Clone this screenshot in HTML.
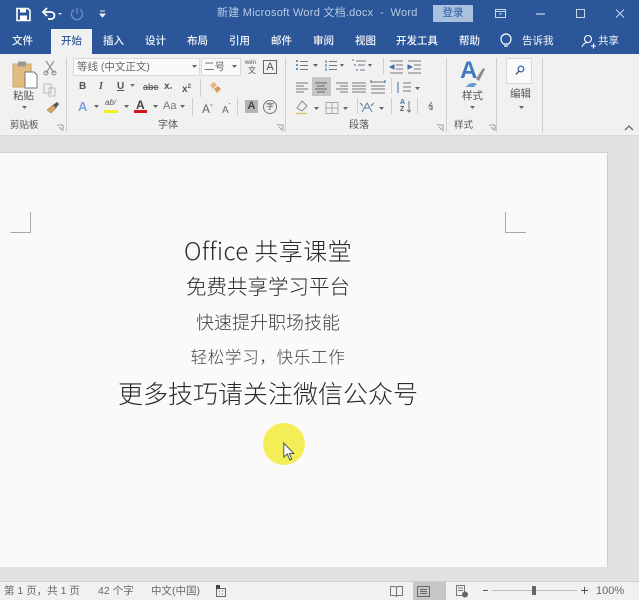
<!DOCTYPE html>
<html lang="zh"><head><meta charset="utf-8"><style>
html,body{margin:0;padding:0}
#r{position:relative;width:639px;height:600px;overflow:hidden;background:#e2e2e2;font-family:"Liberation Sans","Noto Sans CJK SC",sans-serif;color:#444;filter:blur(.35px)}
#r div,#r span.t{position:absolute;white-space:nowrap}
.tab{top:34px;font-size:10.5px;line-height:15px;color:#fff;font-weight:500;opacity:.95}
.s{font-size:10px;line-height:12px;color:#555}
.g{font-size:9.5px;line-height:12px;color:#555}
.d{color:#2a2a2a;font-family:"Noto Sans CJK SC",sans-serif;font-weight:300;left:0;width:536px;text-align:center}
.sep{width:1px;background:#cfcfcf}
svg{position:absolute;overflow:visible}
</style></head><body><div id="r">
<div style="left:0;top:0;width:639px;height:55px;background:#2b579a"></div>
<div style="left:0;top:54px;width:639px;height:81px;background:#f1f1f1"></div>
<div style="left:0;top:135px;width:639px;height:1px;background:#d8d8d8"></div>

<svg style="left:0;top:0" width="120" height="28" fill="none">
<path d="M17 8.500h11l2 2v10H17z" stroke="#fff" stroke-width="1.600"/><rect x="20" y="9" width="6" height="3.500" fill="#fff"/><rect x="20" y="15.500" width="7" height="4.500" fill="#fff"/>
<path d="M44 12h7a3.500 3.500 0 0 1 0 7h-3" stroke="#fff" stroke-width="1.800"/><path d="M47 8l-4 4 4 4" stroke="#fff" stroke-width="1.800"/>
<path d="M58 13l2 2 2-2z" fill="#dfe6f2"/>
<path d="M74 9.500a5.500 5.500 0 1 0 6 0M77 8v6" stroke="#6f8fc0" stroke-width="1.300"/>
<path d="M100 11h5M100 14l2.500 3 2.500-3z" stroke="#e8eef8" fill="#e8eef8"/>
</svg>
<div style="left:217px;top:6px;font-size:11px;line-height:15px;letter-spacing:.25px;color:#b9cbe4">新建 Microsoft Word 文档.docx&nbsp; -&nbsp; Word</div>
<div style="left:433px;top:5px;width:40px;height:17px;background:#a9c0df;color:#2b579a;font-size:10.500px;line-height:17px;text-align:center">登录</div>
<svg style="left:490px;top:5px" width="149" height="20" fill="none" stroke="#c9d7ea">
<rect x="5.500" y="4.500" width="10" height="8"/><path d="M5 6.500h11M9 9h3"/>
<path d="M46 9h9" stroke-width="1.200"/>
<rect x="86.500" y="4.500" width="8" height="8"/>
<path d="M126 4.500l8 8M134 4.500l-8 8"/></svg>

<div class="tab" style="left:12px">文件</div>
<div style="left:51px;top:29px;width:41px;height:26px;background:#f1f1f1"></div>
<div class="tab" style="left:61px;color:#2b579a">开始</div>
<div class="tab" style="left:103px">插入</div>
<div class="tab" style="left:145px">设计</div>
<div class="tab" style="left:187px">布局</div>
<div class="tab" style="left:229px">引用</div>
<div class="tab" style="left:271px">邮件</div>
<div class="tab" style="left:313px">审阅</div>
<div class="tab" style="left:355px">视图</div>
<div class="tab" style="left:396px">开发工具</div>
<div class="tab" style="left:459px">帮助</div>
<svg style="left:499px;top:33px" width="16" height="16" fill="none" stroke="#fff" stroke-width="1.200"><path d="M4.500 11C3 9.500 2 8 2 6a5 5 0 0 1 10 0c0 2-1 3.500-2.500 5zM5 13h4"/></svg>
<div class="tab" style="left:522px;font-weight:normal">告诉我</div>
<svg style="left:581px;top:34px" width="16" height="16" fill="none" stroke="#fff" stroke-width="1.100"><circle cx="7" cy="5" r="3.500"/><path d="M1 13c1-3 3-4.500 6-4.500M10 12h5M12.500 9.500v5"/></svg>
<div class="tab" style="left:598px;font-weight:normal">共享</div>

<!-- clipboard -->
<svg style="left:10px;top:58px" width="50" height="55" fill="none">
<rect x="3" y="6" width="18" height="23" fill="#e3bd7f" stroke="#c9a56a"/><rect x="8" y="3.500" width="8" height="5" fill="#999"/>
<path d="M15 14h9l3 3v13H15z" fill="#fff" stroke="#777"/>
<path d="M36 3l8 12M44 3l-8 12" stroke="#999" stroke-width="1.300"/><circle cx="36" cy="15" r="2" stroke="#888"/><circle cx="44" cy="15" r="2" stroke="#888"/>
<path d="M34 26h7l0 9h-7zM39 30h6v8h-6z" stroke="#bbb"/>
<path d="M37 52l6-5 3 3-5 5z" fill="#d6a566" stroke="#a9824f" stroke-width=".6"/><path d="M43 47l4-3 2 2-3 4z" fill="#555"/>
</svg>
<div class="s" style="left:13px;top:90px;font-size:10.500px">粘贴</div>
<svg style="left:22px;top:106px" width="8" height="5"><path d="M0 0h5l-2.500 3z" fill="#666"/></svg>
<div class="g" style="left:10px;top:120px">剪贴板</div>
<div class="sep" style="left:66px;top:58px;height:74px"></div>

<!-- font -->
<div style="left:73px;top:58px;width:127px;height:18px;background:#fafafa;border:1px solid #d9d9d9;box-sizing:border-box;font-size:10.500px;line-height:16px;color:#666;padding-left:3px">等线 (中文正文)</div>
<div style="left:201px;top:58px;width:40px;height:18px;background:#fafafa;border:1px solid #d9d9d9;box-sizing:border-box;font-size:10.500px;line-height:16px;color:#666;padding-left:2px">二号</div>
<svg style="left:192px;top:65px" width="50" height="5"><path d="M0 0h5l-2.500 3zM40 0h5l-2.500 3z" fill="#666"/></svg>
<div style="left:245px;top:60px;font-size:6px;line-height:7px;color:#555">wén</div>
<div style="left:248px;top:66px;font-size:8px;line-height:9px;color:#555">文</div>
<div style="left:263px;top:60px;width:14px;height:14px;border:1px solid #666;box-sizing:border-box;font-size:11px;line-height:13px;text-align:center;color:#555">A</div>

<div style="left:79px;top:81px;font-size:10px;line-height:12px;font-weight:bold;color:#555">B</div>
<div style="left:99px;top:81px;font-size:10px;line-height:12px;font-style:italic;font-family:'Liberation Serif',serif;font-weight:bold;color:#555">I</div>
<div style="left:117px;top:81px;font-size:10px;line-height:12px;font-weight:bold;text-decoration:underline;color:#555">U</div>
<div style="left:143px;top:81px;font-size:9px;line-height:12px;font-weight:bold;text-decoration:line-through;color:#666">abc</div>
<div style="left:164px;top:81px;font-size:10px;line-height:12px;font-weight:bold;color:#555">x<span style="font-size:6px">₂</span></div>
<div style="left:182px;top:81px;font-size:10px;line-height:12px;font-weight:bold;color:#555">x<span style="font-size:6px;vertical-align:4px">2</span></div>
<svg style="left:130px;top:84px" width="8" height="5"><path d="M0 0h5l-2.500 3z" fill="#777"/></svg>
<div class="sep" style="left:200px;top:79px;height:18px"></div>
<svg style="left:207px;top:80px" width="16" height="14"><path d="M3 5l4-3 3 3-4 4z" fill="#e4b478"/><path d="M7 9l4-3 3 3-4 4z" fill="#d89a5c"/></svg>

<div style="left:78px;top:99px;font-size:13px;line-height:15px;color:#7fa6d8;font-weight:bold">A</div>
<svg style="left:94px;top:105px" width="6" height="4"><path d="M0 0h5l-2.500 3z" fill="#666"/></svg>
<div style="left:105px;top:98px;font-size:8px;line-height:10px;color:#555;font-style:italic">ab<span style="color:#888">/</span></div>
<div style="left:104px;top:110px;width:14px;height:3px;background:#f2ef1c"></div>
<svg style="left:124px;top:105px" width="6" height="4"><path d="M0 0h5l-2.500 3z" fill="#666"/></svg>
<div style="left:136px;top:99px;font-size:12px;line-height:12px;color:#444;font-weight:bold">A</div>
<div style="left:134px;top:110px;width:13px;height:3px;background:#d4141c"></div>
<svg style="left:153px;top:105px" width="6" height="4"><path d="M0 0h5l-2.500 3z" fill="#666"/></svg>
<div style="left:163px;top:100px;font-size:11px;line-height:13px;color:#777">Aa</div>
<svg style="left:180px;top:105px" width="6" height="4"><path d="M0 0h5l-2.500 3z" fill="#666"/></svg>
<div class="sep" style="left:192px;top:98px;height:18px"></div>
<div style="left:202px;top:100px;font-size:12px;line-height:14px;color:#666">A<span style="font-size:6px;vertical-align:5px">^</span></div>
<div style="left:222px;top:101px;font-size:10px;line-height:13px;color:#666">A<span style="font-size:6px;vertical-align:5px">ˇ</span></div>
<div class="sep" style="left:237px;top:98px;height:18px"></div>
<div style="left:245px;top:100px;width:13px;height:13px;background:#b5b5b5;font-size:11px;line-height:13px;text-align:center;font-weight:bold;color:#444">A</div>
<div style="left:263px;top:100px;width:14px;height:14px;border:1px solid #777;border-radius:50%;box-sizing:border-box;font-size:8px;line-height:12px;text-align:center;color:#555">字</div>
<div class="g" style="left:158px;top:120px;font-size:10px">字体</div>
<svg style="left:56px;top:124px" width="230" height="9" fill="none" stroke="#888" stroke-width=".8"><path d="M1 1h6v6M3 3l3 3M221 1h6v6M223 3l3 3"/></svg>
<div class="sep" style="left:285px;top:58px;height:74px"></div>

<!-- paragraph -->
<div style="left:312px;top:77px;width:19px;height:19px;background:#c6c6c6"></div>
<svg style="left:294px;top:58px" width="150" height="60" fill="none" stroke="#777">
<path d="M2 3h2M2 7h2M2 11h2" stroke="#3f6fae" stroke-width="1.500"/><path d="M6 3.500h8M6 7.500h8M6 11.500h8"/><path d="M19 6h5l-2.500 3z" fill="#666" stroke="none"/>
<path d="M32 2v3M32 6v3M32 10v3" stroke="#3f6fae"/><path d="M35 3.500h8M35 7.500h8M35 11.500h8"/><path d="M46 6h4l-2 3z" fill="#666" stroke="none"/>
<path d="M58 2h2M60 7h2M62 12h2" stroke="#3f6fae"/><path d="M62 3h10M64 7h7M66 12h5"/><path d="M74 6h4l-2 3z" fill="#666" stroke="none"/>
<path d="M96 3h13M102 7h7M102 11h7M96 15h13"/><path d="M100 7l-4 2 4 2z" fill="#3f6fae" stroke="#3f6fae"/>
<path d="M114 3h13M120 7h7M120 11h7M114 15h13"/><path d="M114 7l4 2-4 2z" fill="#3f6fae" stroke="#3f6fae"/>
<path d="M2 25h12M2 28h8M2 31h12M2 34h8"/>
<path d="M21 25h12M23 28h8M21 31h12M23 34h8" stroke="#666"/>
<path d="M42 25h12M46 28h8M42 31h12M46 34h8"/><path d="M58 25h14M58 28h14M58 31h14M58 34h14"/>
<path d="M77 24h14M77 28h14M77 31h14M77 35h14"/><path d="M77 22v3M91 22v3" stroke="#3f6fae"/>
<path d="M109 25h8M109 29h8M109 33h8"/><path d="M104 24v11" stroke="#3f6fae"/>
<path d="M121 29h5l-2.500 3z" fill="#666" stroke="none"/>
<rect x="32" y="44.500" width="12" height="11" stroke="#aaa"/><path d="M38 44.500v11M32 50h12" stroke="#aaa"/>
<path d="M49 49h5l-2.500 3z" fill="#666" stroke="none"/>
<path d="M3 50l5-7 5 5-5 5z" stroke="#888"/><path d="M2 55.500h11" stroke="#d8c77a" stroke-width="1.500"/>
<path d="M20 49h5l-2.500 3z" fill="#666" stroke="none"/>
<path d="M68 54l5-9 5 9M70 50h6M66 45l3 3M80 45l-3 3" stroke="#5a7ea8"/>
<path d="M85 49h5l-2.500 3z" fill="#666" stroke="none"/>
<path d="M115 43v11M113 52l2 2 2-2" stroke="#777"/>
<path d="M138 44l-3 4h3M138 47v5M135 50l3 2" stroke="#666"/>
</svg>
<div class="sep" style="left:383px;top:58px;height:16px"></div>
<div class="sep" style="left:391px;top:78px;height:16px"></div>
<div class="sep" style="left:391px;top:98px;height:16px"></div>
<div class="sep" style="left:357px;top:98px;height:16px"></div>
<div class="sep" style="left:417px;top:98px;height:16px"></div>
<div style="left:400px;top:99px;font-size:7px;line-height:8px;color:#3f6fae;font-weight:bold">A</div>
<div style="left:400px;top:106px;font-size:7px;line-height:8px;color:#555;font-weight:bold">Z</div>
<div class="g" style="left:349px;top:120px;font-size:10px">段落</div>
<svg style="left:436px;top:124px" width="90" height="9" fill="none" stroke="#888" stroke-width=".8"><path d="M1 1h6v6M3 3l3 3M53 1h6v6M55 3l3 3"/></svg>
<div class="sep" style="left:446px;top:58px;height:74px"></div>

<!-- styles -->
<div style="left:460px;top:57px;font-size:24px;line-height:28px;font-weight:bold;color:#3f79bf">A</div>
<svg style="left:461px;top:62px" width="28" height="28"><path d="M15 17l7-11 2 1-6 12z" fill="#8a8a8a"/><path d="M5 25c2-4 7-5 11-3l-3 3z" fill="#6c9bd2"/></svg>
<div class="s" style="left:462px;top:90px;font-size:10.500px">样式</div>
<svg style="left:470px;top:106px" width="8" height="5"><path d="M0 0h5l-2.500 3z" fill="#666"/></svg>
<div class="g" style="left:454px;top:120px">样式</div>
<div class="sep" style="left:496px;top:58px;height:74px"></div>

<!-- editing -->
<div style="left:506px;top:58px;width:26px;height:26px;background:#fafafa;border:1px solid #d9d9d9;box-sizing:border-box"></div>
<svg style="left:512px;top:62px" width="14" height="14" fill="none" stroke="#3f6fae" stroke-width="1.300"><circle cx="9" cy="7" r="2.800"/><path d="M7 9l-3 3.500" stroke="#666" stroke-width="1.600"/></svg>
<div class="s" style="left:510px;top:88px;font-size:10.500px">编辑</div>
<svg style="left:519px;top:106px" width="8" height="5"><path d="M0 0h5l-2.500 3z" fill="#666"/></svg>
<div class="sep" style="left:542px;top:58px;height:74px"></div>
<svg style="left:624px;top:124px" width="12" height="8" fill="none" stroke="#666" stroke-width="1.300"><path d="M1 6l4-4 4 4"/></svg>

<!-- document -->
<div style="left:0;top:152px;width:607px;height:415px;background:#fafafa"></div>
<div style="left:0;top:152px;width:607px;height:1px;background:#d3d3d3"></div>
<div style="left:607px;top:152px;width:1px;height:415px;background:#cfcfcf"></div>
<svg style="left:0;top:205px" width="540" height="30" fill="none" stroke="#a8a8a8"><path d="M10.500 27.500H30.500V7M505.500 7V27.500H526"/></svg>

<div class="d" style="top:234px;font-size:24px;line-height:32px;letter-spacing:.4px">Office 共享课堂</div>
<div class="d" style="top:270px;font-size:20.500px;line-height:30px">免费共享学习平台</div>
<div class="d" style="top:308px;font-size:18px;line-height:28px;color:#3d3d3d">快速提升职场技能</div>
<div class="d" style="top:343px;font-size:16.500px;line-height:26px;letter-spacing:.7px;color:#444">轻松学习，快乐工作</div>
<div class="d" style="top:375px;font-size:25px;line-height:36px">更多技巧请关注微信公众号</div>

<div style="left:263px;top:423px;width:42px;height:42px;border-radius:50%;background:#f3ee55"></div>
<svg style="left:283px;top:442px" width="13" height="20"><path d="M.8 1v14l3.500-3 2.500 6 2-1-2.500-5.500h4.500z" fill="#fff" stroke="#555" stroke-width="1"/></svg>

<!-- status bar -->
<div style="left:0;top:581px;width:639px;height:19px;background:#f1f1f1;border-top:1px solid #cfcfcf;box-sizing:border-box"></div>
<div class="s" style="left:4px;top:585px;font-size:10.500px;line-height:13px;color:#666">第 1 页，共 1 页</div>
<div class="s" style="left:98px;top:585px;font-size:10.500px;line-height:13px;color:#666">42 个字</div>
<div class="s" style="left:151px;top:585px;font-size:10.500px;line-height:13px;color:#666">中文(中国)</div>
<svg style="left:215px;top:584px" width="13" height="13" fill="none" stroke="#666"><rect x="1.500" y="4.500" width="9" height="8"/><rect x="1" y="1" width="4" height="4" fill="#444" stroke="none"/><path d="M4 7h1M7 7h1M4 10h1M7 10h1"/></svg>
<div style="left:413px;top:582px;width:33px;height:18px;background:#c6c6c6"></div>
<svg style="left:388px;top:584px" width="90" height="14" fill="none" stroke="#777"><path d="M2.500 2.500h5l1 1 1-1h5v9h-5l-1 1-1-1h-5zM8.500 3.500v8"/><path d="M29.500 2.500h12v10h-12zM32 5.500h7M32 7.500h7M32 9.500h7" stroke="#666"/><path d="M68.500 1.500h8v10h-8zM70 4h5M70 6.500h5"/><circle cx="77" cy="10.500" r="3" fill="#666" stroke="none"/></svg>
<div style="left:483px;top:590px;width:5px;height:1px;background:#555"></div>
<div style="left:492px;top:590px;width:85px;height:1px;background:#bdbdbd"></div>
<div style="left:532px;top:586px;width:4px;height:9px;background:#666"></div>
<div style="left:581px;top:590px;width:7px;height:1px;background:#555"></div>
<div style="left:584px;top:587px;width:1px;height:7px;background:#555"></div>
<div class="s" style="left:596px;top:585px;font-size:11px;line-height:13px;color:#666">100%</div>
</div></body></html>
